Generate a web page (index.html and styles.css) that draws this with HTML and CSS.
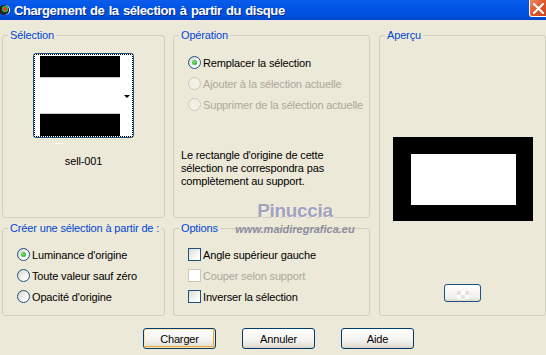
FILE: index.html
```html
<!DOCTYPE html>
<html lang="fr">
<head>
  <meta charset="UTF-8">
  <title>Chargement de la sélection à partir du disque</title>
  <link rel="stylesheet" href="styles.css">
</head>
<body>
  <div class="titlebar">
    <span class="app-icon"></span>
    <span class="title">Chargement de la sélection à partir du disque</span>
    <span class="close">
      <svg width="11" height="11" viewBox="0 0 11 11"><path d="M1 1L10 10M10 1L1 10" stroke="#fff" stroke-width="2" stroke-linecap="square"/></svg>
    </span>
  </div>

  <div class="panels">
    <fieldset class="box sel">
      <legend>Sélection</legend>
      <div class="thumb">
        <div class="thumb-inner">
          <div class="thumb-img"></div>
        </div>
        <span class="thumb-arrow"></span>
      </div>
      <div class="thumb-tick"></div>
      <div class="thumb-name">sell-001</div>
    </fieldset>

    <fieldset class="box op">
      <legend>Opération</legend>
      <div class="opt first"><span class="radio on"></span>Remplacer la sélection</div>
      <div class="opt off"><span class="radio"></span>Ajouter à la sélection actuelle</div>
      <div class="opt off"><span class="radio"></span>Supprimer de la sélection actuelle</div>
      <p class="note">Le rectangle d'origine de cette<br>sélection ne correspondra pas<br>complètement au support.</p>
    </fieldset>

    <fieldset class="box preview">
      <legend>Aperçu</legend>
      <div class="pv"><div class="pv-hole"></div></div>
      <div class="pv-btn"><span class="checker"></span></div>
    </fieldset>

    <fieldset class="box create">
      <legend>Créer une sélection à partir de :</legend>
      <div class="opt"><span class="radio on"></span>Luminance d'origine</div>
      <div class="opt"><span class="radio"></span>Toute valeur sauf zéro</div>
      <div class="opt"><span class="radio"></span>Opacité d'origine</div>
    </fieldset>

    <fieldset class="box options">
      <legend>Options</legend>
      <div class="opt"><span class="check"></span>Angle supérieur gauche</div>
      <div class="opt off"><span class="check"></span>Couper selon support</div>
      <div class="opt"><span class="check"></span>Inverser la sélection</div>
    </fieldset>
  </div>

  <div class="actions">
    <button class="btn default">Charger</button>
    <button class="btn">Annuler</button>
    <button class="btn">Aide</button>
  </div>

  <div class="watermark">
    <div class="wm-name">Pinuccia</div>
    <div class="wm-url">www.maidiregrafica.eu</div>
  </div>
</body>
</html>
```

FILE: styles.css
```css
body {
  margin: 0;
  width: 546px;
  height: 355px;
  overflow: hidden;
  background: #ece9d8;
  font-family: "Liberation Sans", Arial, sans-serif;
  font-size: 11px;
  letter-spacing: -0.15px;
  color: #000;
  position: relative;
}

/* title bar */
.titlebar {
  height: 20px;
  display: flex;
  align-items: center;
  background: linear-gradient(#0a5ceb, #0055e5 40%, #0051dd 80%, #0045c8);
}
.app-icon {
  width: 10px;
  height: 10px;
  margin-left: -1px;
  border-radius: 50%;
  background: radial-gradient(circle at 60% 40%, #e33 0 2px, #2b3 2px 3px, #222 3px);
  box-shadow: 1px 0 0 #fff;
}
.title {
  margin-left: 5px;
  color: #fff;
  font-family: "Liberation Sans", Arial, sans-serif;
  font-weight: bold;
  font-size: 13px;
  letter-spacing: -0.4px;
  word-spacing: 1px;
  text-shadow: 1px 1px 0 #0a2a8a;
  white-space: nowrap;
}
.close {
  margin-left: auto;
  margin-right: -4px;
  align-self: flex-start;
  width: 19px;
  height: 16px;
  border: 1px solid #fff;
  border-top: 0;
  border-radius: 0 0 0 3px;
  background: linear-gradient(135deg, #f08b63, #e0542a 50%, #c9401c);
  display: flex;
  align-items: center;
  justify-content: center;
}
.close svg {
  margin-right: 3px;
}

/* group boxes */
.panels {
  display: grid;
  grid-template-columns: 163px 197px 168px;
  grid-template-rows: 189px 94px;
  column-gap: 8px;
  row-gap: 4px;
  padding: 9px 0 0 2px;
}
.box {
  margin: 0;
  padding: 0;
  min-width: 0;
  border: 1px solid #d0d0bf;
  border-radius: 3px;
  box-sizing: border-box;
}
.box legend {
  margin-left: 5px;
  padding: 0 2px;
  font-size: 11px;
  line-height: 13px;
  color: #0046d5;
  white-space: nowrap;
}
.preview {
  grid-column: 3;
  grid-row: 1 / 3;
  margin-left: 1px;
}

/* selection thumbnail */
.thumb {
  position: relative;
  width: 101px;
  height: 85px;
  margin: 11px auto 0;
  border: 1px solid #1c5180;
  border-radius: 3px;
  background: #fff;
  box-sizing: border-box;
}
.thumb-inner {
  height: 100%;
  border: 1px dotted #000;
  box-sizing: border-box;
  padding: 1px 0 0 5px;
}
.thumb-img {
  width: 80px;
  height: 80px;
  background: linear-gradient(#000 0 21px, #c8c8c8 21px 22px, #fff 22px 57px, #c8c8c8 57px 58px, #000 58px);
}
.thumb-arrow {
  position: absolute;
  right: 3px;
  top: 41px;
  border-left: 3px solid transparent;
  border-right: 3px solid transparent;
  border-top: 3px solid #000;
}
.thumb-tick {
  width: 8px;
  height: 1px;
  margin: 5px 0 0 52px;
  background: #fbfaf5;
}
.thumb-name {
  margin-top: 11px;
  line-height: 13px;
  text-align: center;
}

/* radios and checkboxes */
.opt {
  display: flex;
  align-items: center;
  height: 15px;
  padding-left: 14px;
  margin-top: 6px;
  white-space: nowrap;
}
.op .opt.first {
  margin-top: 13px;
  margin-bottom: 3px;
}
.create .opt:first-of-type,
.options .opt:first-of-type {
  margin-top: 12px;
}
.opt.off {
  color: #aca899;
}
.radio {
  position: relative;
  flex: none;
  width: 13px;
  height: 13px;
  margin-right: 2px;
  border: 1px solid #1c5180;
  border-radius: 50%;
  box-sizing: border-box;
  background: linear-gradient(135deg, #d6d3c6, #fff 75%);
}
.radio.on::after {
  content: "";
  position: absolute;
  left: 3px;
  top: 3px;
  width: 5px;
  height: 5px;
  border-radius: 50%;
  background: radial-gradient(circle at 40% 40%, #6fe06a, #21a121);
}
.off .radio {
  border-color: #cac8bb;
  background: #f1efe6;
}
.check {
  flex: none;
  width: 13px;
  height: 13px;
  margin-right: 2px;
  border: 1px solid #1c5180;
  box-sizing: border-box;
  background: linear-gradient(135deg, #dcdad0, #fff 80%);
}
.off .check {
  border-color: #cac8bb;
  background: #fff;
}
.note {
  margin: 37px 0 0 7px;
  line-height: 13px;
}

/* preview */
.pv {
  width: 140px;
  height: 84px;
  margin: 95px auto 0;
  padding: 17px 17px 16px 18px;
  background: #000;
  box-sizing: border-box;
}
.pv-hole {
  height: 100%;
  background: #fff;
}
.pv-btn {
  width: 37px;
  height: 18px;
  margin: 63px auto 0;
  border: 1px solid #1c5180;
  border-radius: 3px;
  box-sizing: border-box;
  background: linear-gradient(#fff, #f0efea 80%, #dcd8cc);
  display: flex;
  align-items: flex-end;
  justify-content: center;
}
.checker {
  width: 12px;
  height: 9px;
  margin-bottom: 1px;
  background: repeating-conic-gradient(#fff 0 25%, #e4e2da 0 50%) 0 0 / 8px 8px;
}

/* dialog buttons */
.actions {
  display: flex;
  gap: 26px;
  padding-left: 143px;
  margin-top: 12px;
}
.btn {
  width: 73px;
  height: 21px;
  padding: 0;
  border: 1px solid #003c74;
  border-radius: 3px;
  background: linear-gradient(#fff, #f3f2ee 60%, #e3e0d6 90%, #d6d0c5);
  font-family: "Liberation Sans", Arial, sans-serif;
  font-size: 11px;
  letter-spacing: -0.15px;
  color: #000;
}
.btn.default {
  box-shadow: inset 0 0 0 1px #ffe6a8, inset -1px -1px 0 1px #eea43c;
}

/* watermark over the dialog */
.watermark {
  position: absolute;
  left: 233px;
  top: 200px;
  width: 124px;
  text-align: center;
  letter-spacing: 0;
  pointer-events: none;
}
.wm-name {
  font-size: 19px;
  font-weight: bold;
  line-height: 22px;
  color: #a2a2bf;
  letter-spacing: -0.3px;
  text-shadow: 1px 1px 0 #f4f2ea;
}
.wm-url {
  margin-top: 1px;
  font-size: 11px;
  font-weight: bold;
  font-style: italic;
  line-height: 12px;
  color: #8c8c9e;
}
```
